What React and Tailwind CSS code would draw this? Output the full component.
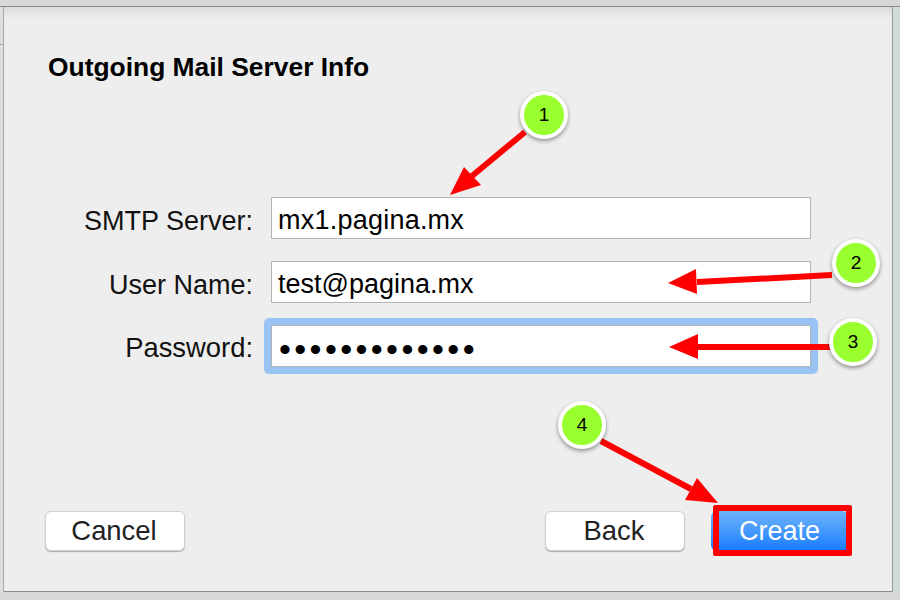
const FONT = "font-['Liberation_Sans',Arial,sans-serif]";

const fields = [
  { label: 'SMTP Server:', value: 'mx1.pagina.mx', gap: 'mt-0', track: 'tracking-[0.23px]' },
  { label: 'User Name:', value: 'test@pagina.mx', gap: 'mt-[22px]', track: '' },
];

const callouts = [
  { n: 1, pos: 'left-[520px] top-[91px]' },
  { n: 2, pos: 'left-[832px] top-[239px]' },
  { n: 3, pos: 'left-[829px] top-[318px]' },
  { n: 4, pos: 'left-[558px] top-[401px]' },
];

function Field({ label, value, gap, track }) {
  return (
    <div className={`flex items-center ${gap}`}>
      <div className="w-[249px] pt-[5px] text-right text-[27px] leading-[32px] text-[#111]">{label}</div>
      <div className={`ml-[18px] flex h-[42px] w-[540px] items-center border border-[#b4b4b4] bg-white pl-[6px] pt-[3px] text-[27px] leading-[32px] text-black ${track}`}>
        {value}
      </div>
    </div>
  );
}

function Button({ children }) {
  return (
    <button className="h-[40px] w-[140px] rounded-[6px] border border-[#d0d0d0] bg-white pr-[2px] text-[27.4px] leading-[32px] text-[#222] shadow-[0_1px_1px_#aaa]">
      {children}
    </button>
  );
}

// arrows are drawn over the dialog, the callout circles sit on their tails
function Arrows() {
  return (
    <svg className="absolute left-0 top-0" width="900" height="600" viewBox="0 0 900 600">
      <g fill="#ff0000" stroke="#ff0000" strokeWidth="6">
        <line x1="525" y1="132" x2="472" y2="176" />
        <line x1="832" y1="275" x2="697" y2="282" />
        <line x1="830" y1="347" x2="698" y2="347" />
        <line x1="601" y1="441" x2="691" y2="489" />
      </g>
      <g fill="#ff0000">
        <polygon points="450,195 464,167 481,185" />
        <polygon points="668,283 696,269 697,294" />
        <polygon points="669,347 698,334 698,359" />
        <polygon points="718,503 697,478 685,500" />
      </g>
    </svg>
  );
}

export default function App() {
  return (
    <div className={`relative flex h-[600px] w-[900px] flex-col overflow-hidden bg-[#d8d6d8] ${FONT}`}>
      {/* window chrome behind the sheet */}
      <div className="h-[6px] shrink-0 bg-[#d8d6d8]" />
      <div className="h-px shrink-0 bg-[#8c8a8c]" />
      <div className="flex h-[585px] shrink-0">
        <div className="w-[3px] shrink-0 bg-[#dedede]">
          <div className="mt-[37px] h-px bg-[#aaa]" />
        </div>
        <div className="w-px shrink-0 bg-[#a8a8a8]" />
        <div className="flex w-[888px] shrink-0 flex-col border-b border-[#8c8c8c] bg-gradient-to-b from-[#dadada] from-0% to-[#eeeeee] to-[2%]">
          <h1 className="ml-[44px] mt-[44px] text-[26.4px] font-bold leading-[32px] text-black">
            Outgoing Mail Server Info
          </h1>
          <div className="mt-[114px]">
            {fields.map((f) => (
              <Field key={f.label} {...f} />
            ))}
            <div className="mt-[15px] flex items-center">
              <div className="w-[249px] pt-[3px] text-right text-[27.4px] leading-[32px] text-[#111]">Password:</div>
              <div className="ml-[11px] rounded-[5px] bg-[#98c3f3] p-[7px]">
                <div className="flex h-[42px] w-[540px] items-center border border-[#b4b4b4] bg-white pl-[7px] pt-[5px] text-[34px] leading-[32px] tracking-[3.4px] text-black">
                  •••••••••••••
                </div>
              </div>
            </div>
          </div>
          <div className="mt-auto mb-[40px] flex pl-[41px]">
            <Button>Cancel</Button>
            <div className="ml-[360px]">
              <Button>Back</Button>
            </div>
            <div className="relative ml-[26px] h-[40px] w-[137px] rounded-[6px] bg-gradient-to-b from-[#6cb3fa] to-[#0f7bff] text-center text-[27px] leading-[40px] text-white">
              Create
              <div className="absolute left-[2px] top-[-6px] h-[51px] w-[139px] rounded-[2px] border-[6px] border-[#ff0000]" />
            </div>
          </div>
        </div>
        <div className="w-px shrink-0 bg-[#9a9a9a]" />
        <div className="flex-1 bg-[#d3dadc]" />
      </div>
      <div className="flex-1 bg-[#d8d6d8]" />

      <Arrows />
      {callouts.map((c) => (
        <div
          key={c.n}
          className={`absolute flex h-[48px] w-[48px] items-center justify-center rounded-full border-[4px] border-white bg-[#9aff2e] text-[19px] text-black shadow-[0_2px_4px_rgba(0,0,0,0.4)] ${c.pos}`}
        >
          {c.n}
        </div>
      ))}
    </div>
  );
}
